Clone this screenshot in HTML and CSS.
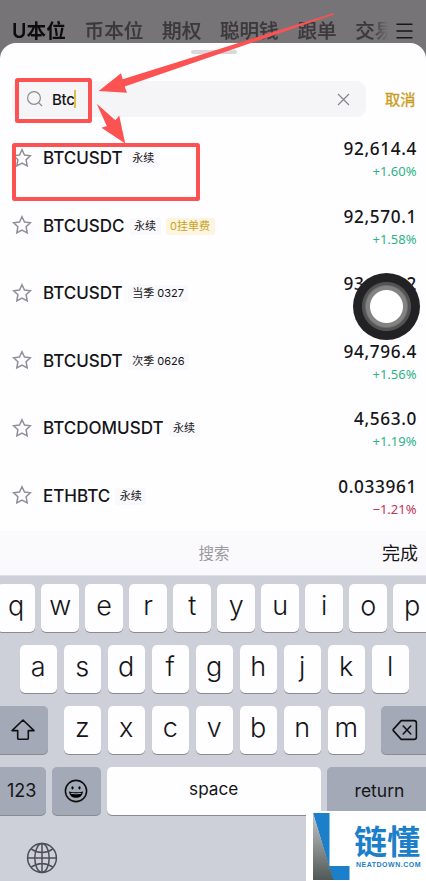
FILE: index.html
```html
<!DOCTYPE html>
<html lang="zh-CN">
<head>
<meta charset="utf-8">
<title>合约搜索</title>
<link rel="stylesheet" href="styles.css">
</head>
<body>
<svg class="defs" width="0" height="0"><defs>
<symbol id="star" viewBox="0 0 20 20"><path d="M10 1.7 12.5 7 18.4 7.7 14.1 11.7 15.2 17.9 10 15.1 4.8 17.9 5.9 11.7 1.6 7.7 7.5 7Z" fill="none" stroke="#8f8f95" stroke-width="1.5"/></symbol>
</defs></svg>
<div class="screen">
<header class="tabs">
  <nav class="tab-list"><span class="active">U本位</span><span>币本位</span><span>期权</span><span>聪明钱</span><span>跟单</span><span>交易</span></nav>
  <svg class="menu" width="18" height="18" viewBox="0 0 18 18"><path d="M.5 2.2h16M.5 9h16M.5 15.8h16" stroke="#171719" stroke-width="1.6"/></svg>
</header>
<main class="sheet">
  <div class="grip"></div>
  <div class="search-row">
    <div class="search">
      <svg width="18" height="18" viewBox="0 0 18 18" fill="none" stroke="#8c8c90" stroke-width="1.2"><circle cx="8" cy="8" r="6.4"/><path d="m12.6 12.6 3.4 3.4"/></svg>
      <span class="query">Btc</span><i class="caret"></i>
      <svg class="clear" width="13" height="13" viewBox="0 0 13 13"><path d="m1 1 11 11M12 1 1 12" stroke="#85858a" stroke-width="1.2"/></svg>
    </div>
    <span class="cancel">取消</span>
  </div>
  <ul class="list">
    <li><svg class="star"><use href="#star"/></svg><b>BTCUSDT</b><em>永续</em><div class="quote"><strong>92,614.4</strong><span>+1.60%</span></div></li>
    <li><svg class="star"><use href="#star"/></svg><b>BTCUSDC</b><em>永续</em><em class="fee">0挂单费</em><div class="quote"><strong>92,570.1</strong><span>+1.58%</span></div></li>
    <li><svg class="star"><use href="#star"/></svg><b>BTCUSDT</b><em>当季 0327</em><div class="quote"><strong>93,502.2</strong><span>+1.57%</span></div></li>
    <li><svg class="star"><use href="#star"/></svg><b>BTCUSDT</b><em>次季 0626</em><div class="quote"><strong>94,796.4</strong><span>+1.56%</span></div></li>
    <li><svg class="star"><use href="#star"/></svg><b>BTCDOMUSDT</b><em>永续</em><div class="quote"><strong>4,563.0</strong><span>+1.19%</span></div></li>
    <li><svg class="star"><use href="#star"/></svg><b>ETHBTC</b><em>永续</em><div class="quote"><strong>0.033961</strong><span class="down">−1.21%</span></div></li>
  </ul>
</main>
<div class="accessory"><span class="hint">搜索</span><span class="done">完成</span></div>
<section class="keyboard">
  <div class="keys top"><kbd>q</kbd><kbd>w</kbd><kbd>e</kbd><kbd>r</kbd><kbd>t</kbd><kbd>y</kbd><kbd>u</kbd><kbd>i</kbd><kbd>o</kbd><kbd>p</kbd></div>
  <div class="keys home"><kbd>a</kbd><kbd>s</kbd><kbd>d</kbd><kbd>f</kbd><kbd>g</kbd><kbd>h</kbd><kbd>j</kbd><kbd>k</kbd><kbd>l</kbd></div>
  <div class="keys lower">
    <kbd class="dark shift"><svg width="26" height="24" viewBox="0 0 26 24"><path d="M13 2 24 12.6H18.3V20.2Q18.3 21.3 17.2 21.3H8.8Q7.7 21.3 7.7 20.2V12.6H2Z" fill="none" stroke="#111" stroke-width="1.6" stroke-linejoin="round"/></svg></kbd>
    <kbd>z</kbd><kbd>x</kbd><kbd>c</kbd><kbd>v</kbd><kbd>b</kbd><kbd>n</kbd><kbd>m</kbd>
    <kbd class="dark erase"><svg width="26" height="22" viewBox="0 0 26 22" fill="none" stroke="#111" stroke-width="1.6" stroke-linejoin="round" stroke-linecap="round"><path d="M9.2 1.6H22Q24.4 1.6 24.4 4V18Q24.4 20.4 22 20.4H9.2L1.5 11.9Q.8 11 1.5 10.1Z"/><path d="m11.2 7 7.6 8M18.8 7l-7.6 8"/></svg></kbd>
  </div>
  <div class="keys bottom">
    <kbd class="dark num">123</kbd>
    <kbd class="dark emoji"><svg width="24" height="24" viewBox="0 0 24 24"><circle cx="12" cy="12" r="10.6" fill="none" stroke="#111" stroke-width="1.6"/><ellipse cx="8.5" cy="8.8" rx="1.1" ry="1.6"/><ellipse cx="15.5" cy="8.8" rx="1.1" ry="1.6"/><path d="M5 12.5Q12 14.2 19 12.5 18.4 18.8 12 18.8T5 12.5Z"/><path d="M6.8 14.3Q12 15.5 17.2 14.3" fill="none" stroke="#a3a9b6" stroke-width="1"/></svg></kbd>
    <kbd class="space">space</kbd><kbd class="dark return">return</kbd>
  </div>
  <svg class="globe" width="32" height="32" viewBox="0 0 32 32" fill="none" stroke="#4c4e56" stroke-width="1.5"><circle cx="16" cy="16" r="14.4"/><ellipse cx="16" cy="16" rx="7.2" ry="14.4"/><path d="M16 1.6v28.8M1.6 16h28.8M5 6.8Q16 14.2 27 6.8M5 25.2Q16 17.8 27 25.2"/></svg>
</section>
<div class="touch"></div>
<svg class="marks" width="426" height="881" viewBox="0 0 426 881">
  <g fill="none" stroke="#fd5252" stroke-width="4"><rect x="17" y="80" width="73" height="41" rx=".5"/><rect x="14" y="145" width="184" height="54" rx=".5"/></g>
  <g fill="#fd5252"><path d="M334 13 122.7 79.3 121 73.2 98.7 91 127 92.8 124.7 86.4 334 14.5Z"/><path d="M96.7 103.7 115.4 120.3 119.2 115.6 125.2 143.5 101.5 127.8 106.8 126Z"/></g>
</svg>
<div class="brand">
  <svg width="38" height="68" viewBox="0 0 38 68"><defs><linearGradient id="steel" x2="0" y2="1"><stop stop-color="#c5c7c7"/><stop offset="1" stop-color="#505858"/></linearGradient></defs><path d="M1 1H17.5V54H37.5V68H21Z" fill="#1b80c9"/><path d="M1 1 21.5 68H1Z" fill="url(#steel)"/></svg>
  <div class="brand-text"><div class="brand-name">链懂</div><div class="brand-url">NEATDOWN.COM</div></div>
</div>
</div>
</body>
</html>
```
FILE: styles.css
```css
* { box-sizing: border-box; }
body { margin: 0; background: #777477; font-family: Inter, "Noto Sans CJK SC", sans-serif; color: #151518; }
.defs { position: absolute; }
.screen { position: relative; width: 426px; height: 881px; overflow: hidden; display: flex; flex-direction: column; }
.tabs { height: 43px; flex: none; display: flex; padding: 16px 12px 0; font: 500 19.6px/30px Inter, "Noto Sans CJK SC", sans-serif; }
.tab-list { width: 377px; display: flex; gap: 18.7px; overflow: hidden; white-space: nowrap; color: #3b393c; -webkit-text-stroke: .2px #3b393c; -webkit-mask-image: linear-gradient(90deg, #000 360px, transparent 377px); mask-image: linear-gradient(90deg, #000 360px, transparent 377px); }
.tab-list span { flex: none; }
.tab-list .active { color: #0c0c0e; font-weight: 600; -webkit-text-stroke: 0; letter-spacing: .1px; }
.menu { margin: 6px 0 0 8px; flex: none; }
.sheet { height: 488px; flex: none; background: #fefdff; border-radius: 16px 16px 0 0; }
.grip { width: 46px; height: 4px; border-radius: 2px; background: #d9d8dc; margin: 0 auto; position: relative; top: 7px; left: 1px; }
.search-row { display: flex; align-items: center; margin-top: 34px; padding-left: 12px; }
.search { width: 354px; height: 36px; border-radius: 9px; background: #f5f4f7; display: flex; align-items: center; padding: 0 16px 0 14px; }
.query { margin-left: 8px; font-size: 15px; font-weight: 500; letter-spacing: -.3px; }
.caret { width: 2px; height: 18px; margin-left: -1px; background: #e2bc4c; }
.clear { margin-left: auto; }
.cancel { margin-left: 19px; margin-top: -3px; font-size: 15.3px; -webkit-text-stroke: .35px #c99c1b; color: #c99c1b; }
.list { list-style: none; margin: 16px 0 0; padding: 0 9.5px 0 11px; }
.list li { height: 67.5px; display: flex; align-items: flex-start; padding-top: 7px; }
.star { width: 20px; height: 20px; margin: 7.5px 11px 0 1px; flex: none; }
.list b { font: 500 17px/34px Inter; margin-top: 1px; flex: none; }
.list em { font-style: normal; font-size: 11px; line-height: 17px; padding: 0 4.5px; border-radius: 3px; background: #f9f8fb; margin: 10px 0 0 5px; flex: none; }
.list .fee { background: #fdf5dd; color: #caa028; margin-left: 5px; }
.quote { margin-left: auto; text-align: right; display: flex; flex-direction: column; }
.quote strong { font: 500 17.2px/18px "Noto Sans"; letter-spacing: .65px; margin: 0 -.5px 0 0; }
.quote span { font: 400 13px/18px "Noto Sans"; color: #2bb583; margin-top: 4px; }
.quote .down { color: #c23458; }
.accessory { height: 44px; flex: none; background: #faf9fc; display: grid; grid-template-columns: 1fr auto 1fr; align-items: center; }
.hint { grid-column: 2; font-size: 15.5px; color: #9b9a9f; position: relative; left: 1px; top: -1px; }
.done { justify-self: end; font-size: 18px; margin: -3px 8px 0 0; }
.keyboard { flex: 1; background: #cdcfd9; padding-top: 8px; border-top: 1px solid #dedfe5; }
.keys { display: flex; gap: 6.5px; height: 48px; margin-bottom: 13px; }
.top { margin-left: -2.6px; }
.home { margin-left: 19.5px; }
.lower, .bottom { margin-left: -4px; }
kbd { flex: none; width: 37.5px; height: 48px; border-radius: 5px; background: #fefdff; box-shadow: 0 1px 0 #898b91; display: flex; justify-content: center; align-items: center; font: 300 27px/48px Inter; padding-bottom: 4px; }
kbd.dark { background: #a3a9b6; padding-bottom: 0; }
.shift { width: 51.5px; margin-right: 9.5px; padding-left: 2px; }
.erase { width: 52px; margin-left: 9.5px; padding-right: 4px; }
.num { width: 49.5px; font-size: 18px; font-weight: 400; padding-left: 2px; }
.emoji { width: 48.5px; }
.space { width: 213.5px; font-size: 17.2px; font-weight: 400; }
.return { width: 103px; font-size: 17.5px; font-weight: 400; padding-left: 2px; }
.globe { display: block; margin: 27px 0 0 26px; }
.touch { position: absolute; left: 353px; top: 273px; width: 67px; height: 67px; border-radius: 50%; background: radial-gradient(circle closest-side, #fff 0 16px, #838383 17px 20px, #6d6d6d 21px, #535353 22px 24px, #222224 25px); }
.marks { position: absolute; left: 0; top: 0; }
.brand { position: absolute; right: 0; bottom: 0; width: 120px; height: 70px; background: #fff; display: flex; padding: 1px 0 0 6px; }
.brand svg { flex: none; }
.brand-text { margin-left: 4px; width: 70px; color: #1b80c9; }
.brand-name { font: 700 33px/34px "Noto Sans CJK SC"; margin-top: 11px; white-space: nowrap; }
.brand-url { font: 700 7px/9px "Liberation Sans"; letter-spacing: .5px; white-space: nowrap; margin: 3px 0 0 2px; }
```
